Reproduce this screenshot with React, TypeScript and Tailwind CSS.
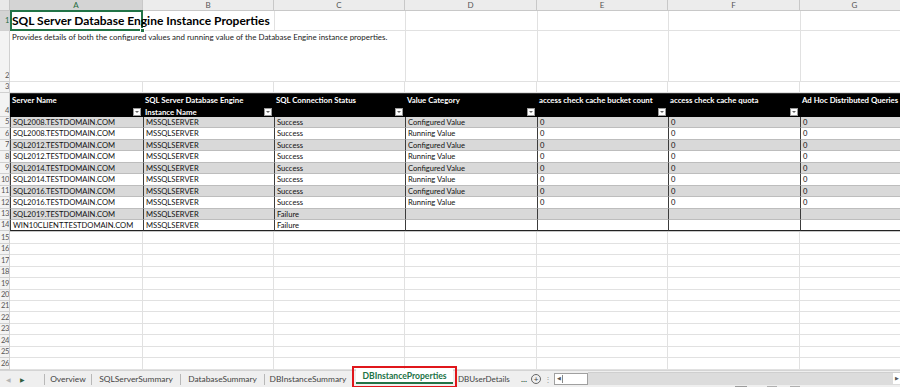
import React from "react";

const COLS = [
  { l: "A", w: 133 },
  { l: "B", w: 131 },
  { l: "C", w: 131 },
  { l: "D", w: 132 },
  { l: "E", w: 131 },
  { l: "F", w: 132 },
  { l: "G", w: 110 },
];

const HEAD = [
  "Server Name",
  "SQL Server Database Engine Instance Name",
  "SQL Connection Status",
  "Value Category",
  "access check cache bucket count",
  "access check cache quota",
  "Ad Hoc Distributed Queries",
];

const servers = ["SQL2008", "SQL2008", "SQL2012", "SQL2012", "SQL2014", "SQL2014", "SQL2016", "SQL2016"];
const DATA: string[][] = [
  ...servers.map((s, i) => [
    `${s}.TESTDOMAIN.COM`,
    "MSSQLSERVER",
    "Success",
    i % 2 === 0 ? "Configured Value" : "Running Value",
    "0",
    "0",
    "0",
  ]),
  ["SQL2019.TESTDOMAIN.COM", "MSSQLSERVER", "Failure", "", "", "", ""],
  ["WIN10CLIENT.TESTDOMAIN.COM", "MSSQLSERVER", "Failure", "", "", "", ""],
];

const font = { fontFamily: "Lato, 'Open Sans', sans-serif" };

function RowNum({ n, sel, align = "end" }: { n: number; sel?: boolean; align?: "end" | "center" }) {
  return (
    <div
      className={`w-[10px] shrink-0 flex ${align === "end" ? "items-end" : "items-center"} justify-end overflow-hidden border-r border-b border-[#d0d0d0] text-[7.6px] tracking-[-0.4px] leading-[11px] ${
        sel ? "bg-[#d3d3d3] text-[#1e6b40]" : "bg-[#f3f3f3] text-[#555]"
      }`}
    >
      <span className="whitespace-nowrap">{n}</span>
    </div>
  );
}

function FilterBtn() {
  return (
    <div className="absolute right-[2px] bottom-[1px] w-[8px] h-[8px] bg-white border border-[#9a9a9a] flex items-center justify-center">
      <div className="w-0 h-0 border-l-[2px] border-r-[2px] border-t-[2px] border-l-transparent border-r-transparent border-t-[#666]" />
    </div>
  );
}

function EmptyRow({ n }: { n: number }) {
  return (
    <div className="flex h-[11.45px] shrink-0">
      <RowNum n={n} />
      {COLS.map((c) => (
        <div
          key={c.l}
          style={{ width: c.w }}
          className="shrink-0 border-r border-b border-[#e1e1e1]"
        />
      ))}
    </div>
  );
}

export default function App() {
  return (
    <div className="w-[900px] h-[387px] overflow-hidden bg-white flex flex-col relative" style={font}>
      {/* column header band */}
      <div className="flex h-[11px] shrink-0">
        <div className="w-[10px] shrink-0 bg-[#e8e8e8] border-r border-b border-[#c4c4c4]" />
        {COLS.map((c) => (
          <div
            key={c.l}
            style={{ width: c.w }}
            className={`shrink-0 flex items-center justify-center text-[8px] leading-none border-r border-b border-[#c8c8c8] ${
              c.l === "A" ? "bg-[#d4d4d4] text-[#1e6b40] border-b-[#217346]" : "bg-[#ececec] text-[#555]"
            }`}
          >
            {c.l}
          </div>
        ))}
      </div>

      {/* row 1: title */}
      <div className="flex h-[20px] shrink-0">
        <RowNum n={1} sel align="center" />
        <div className="relative shrink-0 w-[264px] border-b border-[#e1e1e1] flex items-end">
          <div className="absolute left-0 top-0 w-[133px] h-[21px] border-2 border-[#217346] -translate-y-[1px]" />
          <div className="absolute left-[130px] top-[17px] w-[5px] h-[5px] bg-[#217346] border border-white" />
          <span className="absolute z-10 left-[2px] bottom-[1px] whitespace-nowrap text-[12px] font-bold text-black leading-[16px]">
            SQL Server Database Engine Instance Properties
          </span>
        </div>
        {COLS.slice(2).map((c) => (
          <div key={c.l} style={{ width: c.w }} className="shrink-0 border-l border-b border-[#e1e1e1]" />
        ))}
      </div>

      {/* row 2: subtitle */}
      <div className="flex h-[51px] shrink-0">
        <RowNum n={2} />
        <div className="relative shrink-0 w-[395px] border-b border-[#e1e1e1]">
          <span className="absolute left-[2px] top-[1px] whitespace-nowrap text-[7.95px] text-[#222] leading-[10px]">
            Provides details of both the configured values and running value of the Database Engine instance properties.
          </span>
        </div>
        {COLS.slice(3).map((c) => (
          <div key={c.l} style={{ width: c.w }} className="shrink-0 border-l border-b border-[#e1e1e1]" />
        ))}
      </div>

      {/* row 3 */}
      <div className="flex h-[11px] shrink-0">
        <RowNum n={3} />
        {COLS.map((c) => (
          <div key={c.l} style={{ width: c.w }} className="shrink-0 border-r border-b border-[#e1e1e1]" />
        ))}
      </div>

      {/* row 4: table header */}
      <div className="flex h-[24px] shrink-0">
        <RowNum n={4} />
        {COLS.map((c, i) => (
          <div
            key={c.l}
            style={{ width: c.w }}
            className="relative shrink-0 bg-black text-white font-bold text-[7.8px] leading-[11.5px] px-[2px] pt-[1px] border-t border-[#333]"
          >
            {i === 1 ? (
              <>
                <div className="whitespace-nowrap">SQL Server Database Engine</div>
                <div className="whitespace-nowrap">Instance Name</div>
              </>
            ) : (
              <div className="whitespace-nowrap">{HEAD[i]}</div>
            )}
            {i < 6 && <FilterBtn />}
          </div>
        ))}
      </div>

      {/* data rows */}
      {DATA.map((r, ri) => (
        <div key={ri} className="flex h-[11.45px] shrink-0">
          <RowNum n={ri + 5} />
          {r.map((v, ci) => (
            <div
              key={ci}
              style={{ width: COLS[ci].w }}
              className={`shrink-0 overflow-hidden whitespace-nowrap text-[7.6px] leading-[10.45px] text-[#111] pl-[2px] border-l border-[#3c3c3c] ${
                ri % 2 === 0 ? "bg-[#d9d9d9]" : "bg-white"
              } ${ri === DATA.length - 1 ? "border-b border-b-[#222]" : "border-b border-b-[#bdbdbd]"}`}
            >
              {v}
            </div>
          ))}
        </div>
      ))}
      <div className="h-[1px] shrink-0 flex">
        <div className="w-[10px] bg-[#f3f3f3] border-r border-[#d0d0d0]" />
        <div className="flex-1 bg-[#c8c8c8]" />
      </div>

      {/* empty rows */}
      {Array.from({ length: 12 }, (_, i) => (
        <EmptyRow key={i} n={i + 15} />
      ))}

      {/* sheet tab bar */}
      <div className="flex-1 bg-[#efefef] border-t border-[#d4d4d4] flex items-start text-[8.4px] text-[#444] relative">
        <div className="flex items-center h-[15px] mt-[1px]">
          <span className="w-[16px] text-center text-[6px] text-[#b5b5b5]">◀</span>
          <span className="w-[12px] text-center text-[6px] text-[#2f5f3f]">▶</span>
          <span className="w-[16px]" />
          <span className="h-[11px] w-px bg-[#b8b8b8]" />
          <span className="w-[46px] text-center">Overview</span>
          <span className="h-[11px] w-px bg-[#b8b8b8]" />
          <span className="w-[88px] text-center">SQLServerSummary</span>
          <span className="h-[11px] w-px bg-[#b8b8b8]" />
          <span className="w-[83px] text-center">DatabaseSummary</span>
          <span className="h-[11px] w-px bg-[#b8b8b8]" />
          <span className="w-[86px] text-center">DBInstanceSummary</span>
        </div>
        {/* active tab with red highlight */}
        <div className="relative -mt-[5px] ml-[1px] w-[105px] h-[22px] border-2 border-[#e0161b] flex items-center justify-center">
          <div className="w-[97px] h-[15px] bg-white flex flex-col items-center justify-center border-b-2 border-[#217346]">
            <span className="text-[8.6px] font-bold text-[#217346] leading-none mt-[1px]">DBInstanceProperties</span>
          </div>
        </div>
        <div className="flex items-center h-[15px] mt-[1px]">
          <span className="w-[64px] pl-[1px] text-[8px]">DBUserDetails</span>
          <span className="w-[10px] text-[#2f5f3f] font-bold">...</span>
          <span className="w-[10px] h-[10px] rounded-full border border-[#666] flex items-center justify-center text-[8px] leading-none text-[#444]">+</span>
          <span className="w-[13px] text-center text-[#999]">⋮</span>
          <div className="w-[34px] h-[12px] bg-white border border-[#a0a0a0] flex items-center pl-[2px]">
            <span className="text-[5px] text-[#555]">◀</span>
            <span className="ml-[1px] h-[8px] w-px bg-[#888]" />
          </div>
        </div>
        <div className="flex-1 h-[13px] mt-[1px] bg-[#dcdcdc] border-t border-[#cfcfcf] flex justify-end items-center">
          <span className="w-[7px] h-[11px] bg-white flex items-center justify-center text-[5px] text-[#555]">▶</span>
        </div>
        <div className="absolute left-[735px] top-[15px] w-[12px] h-[3px] bg-[#9c9c9c]" />
        <div className="absolute left-[767px] top-[15px] w-[10px] h-[3px] bg-[#b0b0b0]" />
        <div className="absolute left-[790px] top-[15px] w-[10px] h-[3px] bg-[#b0b0b0]" />
      </div>
    </div>
  );
}
